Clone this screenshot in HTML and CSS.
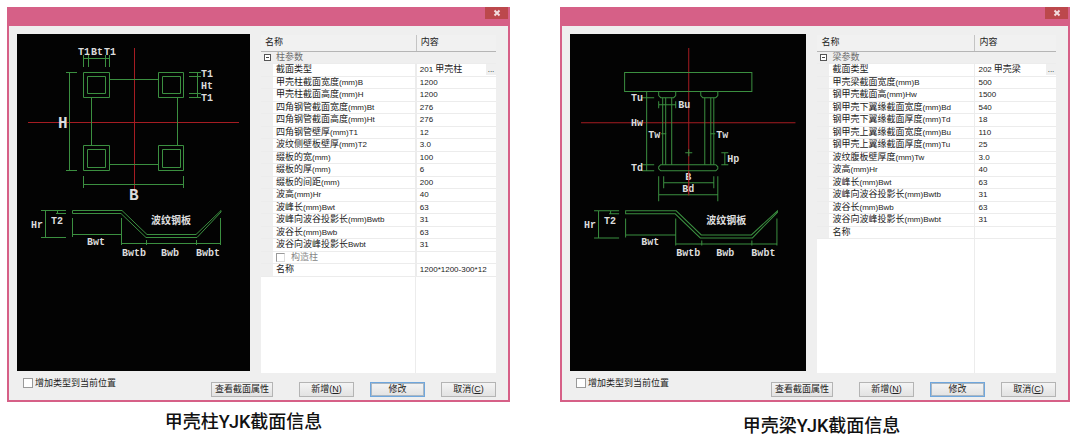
FILE: index.html
```html
<!DOCTYPE html>
<html lang="zh-CN">
<head>
<meta charset="utf-8">
<title>YJK截面信息</title>
<link rel="stylesheet" href="styles.css">
</head>
<body>
<main class="figures">
  <figure class="figure">
    <section class="dialog" aria-label="甲壳柱">
      <header class="titlebar"><button class="close" type="button" aria-label="关闭"><svg viewBox="0 0 8 8" width="8" height="8"><path d="M1.500 1.500L6.500 6.500M6.500 1.500L1.500 6.500"/></svg></button></header>
      <div class="content">
        <svg class="drawing" viewBox="0 0 233 337" role="img" aria-label="甲壳柱截面">
          <g class="axis"><path d="M117.500 14V158M11 88.500H222"/></g>
          <g class="line">
            <path d="M66.500 38.500h26v25h-26zM70.500 42.500h18v17h-18zM141.500 38.500h25v25h-25zM145.500 42.500h18v17h-18z"/>
            <path d="M66.500 111.500h26v25h-26zM70.500 115.500h18v18h-18zM141.500 111.500h25v25h-25zM145.500 115.500h18v18h-18z"/>
            <path d="M92.500 45.500h49M92.500 130.500h49M74.500 63.500v48M160.500 63.500v48"/>
            <path d="M66.500 24.500h26M66.500 21v12M71.500 21v12M88.500 21v12M92.500 21v12"/>
            <path d="M172 38.500h12M172 42.500h12M172 59.500h12M172 63.500h12M180.500 38.500v25"/>
            <path d="M52.500 38.500v98M49 38.500h11M49 136.500h11"/>
            <path d="M66.500 150.500h100M66.500 142v12M166.500 142v12"/>
            <path d="M28.500 176.500v27M24 176.500h25M24 203.500h25M39 179.500h10M40.500 176.500v3"/>
            <path d="M204 178L180 203.500H129L104 179.500H55.500V176.500H105L130 200.500H179L204 176.500Z"/>
            <path d="M55.500 184v19M55.500 200.500h49M104.500 184v27M104.500 209.500h99M129.500 206v5M179.500 206v5M203.500 184v27"/>
          </g>
          <g class="label">
            <text x="61" y="21">T1</text><text x="74" y="21">Bt</text><text x="87" y="21">T1</text>
            <text x="184" y="43">T1</text><text x="184" y="55">Ht</text><text x="184" y="67">T1</text>
            <text class="big" x="41" y="94">H</text><text class="big" x="112" y="166">B</text>
            <text x="14" y="194">Hr</text><text x="34" y="190">T2</text>
            <text x="70" y="211">Bwt</text><text x="105" y="222">Bwtb</text><text x="144" y="222">Bwb</text><text x="179" y="222">Bwbt</text>
            <text x="134" y="190">波纹钢板</text>
          </g>
        </svg>
        <div class="grid">
          <table>
            <colgroup><col class="gutter"><col class="name"><col></colgroup>
            <thead><tr><th colspan="2">名称</th><th>内容</th></tr></thead>
            <tbody>
              <tr class="group"><td><button class="toggle" type="button" aria-label="折叠"></button></td><th colspan="2">柱参数</th></tr>
              <tr><td></td><th>截面类型</th><td><div class="pick">201 <span class="cjk">甲壳柱</span><button type="button">...</button></div></td></tr>
              <tr><td></td><th>甲壳柱截面宽度<span>(mm)B</span></th><td>1200</td></tr>
              <tr><td></td><th>甲壳柱截面高度<span>(mm)H</span></th><td>1200</td></tr>
              <tr><td></td><th>四角钢管截面宽度<span>(mm)Bt</span></th><td>276</td></tr>
              <tr><td></td><th>四角钢管截面高度<span>(mm)Ht</span></th><td>276</td></tr>
              <tr><td></td><th>四角钢管壁厚<span>(mm)T1</span></th><td>12</td></tr>
              <tr><td></td><th>波纹侧壁板壁厚<span>(mm)T2</span></th><td>3.0</td></tr>
              <tr><td></td><th>缀板的宽<span>(mm)</span></th><td>100</td></tr>
              <tr><td></td><th>缀板的厚<span>(mm)</span></th><td>6</td></tr>
              <tr><td></td><th>缀板的间距<span>(mm)</span></th><td>200</td></tr>
              <tr><td></td><th>波高<span>(mm)Hr</span></th><td>40</td></tr>
              <tr><td></td><th>波峰长<span>(mm)Bwt</span></th><td>63</td></tr>
              <tr><td></td><th>波峰向波谷投影长<span>(mm)Bwtb</span></th><td>31</td></tr>
              <tr><td></td><th>波谷长<span>(mm)Bwb</span></th><td>63</td></tr>
              <tr><td></td><th>波谷向波峰投影长<span>Bwbt</span></th><td>31</td></tr>
              <tr><td></td><th><label class="option"><input type="checkbox" disabled>构造柱</label></th><td></td></tr>
              <tr><td></td><th>名称</th><td>1200*1200-300*12</td></tr>
            </tbody>
          </table>
        </div>
      </div>
      <footer class="actions">
        <label class="append"><input type="checkbox">增加类型到当前位置</label>
        <div class="buttons">
          <button class="view" type="button">查看截面属性</button>
          <button type="button">新增(<u>N</u>)</button>
          <button class="primary" type="button">修改</button>
          <button type="button">取消(<u>C</u>)</button>
        </div>
      </footer>
    </section>
    <figcaption class="caption-column">甲壳柱YJK截面信息</figcaption>
  </figure>

  <figure class="figure">
    <section class="dialog" aria-label="甲壳梁">
      <header class="titlebar"><button class="close" type="button" aria-label="关闭"><svg viewBox="0 0 8 8" width="8" height="8"><path d="M1.500 1.500L6.500 6.500M6.500 1.500L1.500 6.500"/></svg></button></header>
      <div class="content">
        <svg class="drawing" viewBox="0 0 236 336" role="img" aria-label="甲壳梁截面">
          <g class="axis"><path d="M118.500 14V161M11 88.500H225"/></g>
          <g class="line">
            <path d="M54.500 38.500h127v19h-127zM88.500 57.500v4l2 2h13l2-2v-4M130.500 57.500v4l2 2h13l2-2v-4"/>
            <path d="M92.500 63.500v67M95.500 63.500v67M101.500 63.500v67M134.500 63.500v67M140.500 63.500v67M143.500 63.500v67"/>
            <path d="M90.500 130.500h55l2 2v2l-2 2h-55l-2-2v-2z"/>
            <path d="M76.500 57.500v79M72 63.500h12M72 130.500h12M72 136.500h12"/>
            <path d="M88.500 70.500h17M88.500 67v7M105.500 67v7M91 99.500h5M140 99.500h5"/>
            <path d="M118.500 115v7M115 118.500h7M154.500 118.500v12M151 118.500h7M151 130.500h7"/>
            <path d="M93.500 148.500h50M93.500 142v12M143.500 142v12M88.500 160.500h59M88.500 142v25M147.500 142v25"/>
            <path d="M28.500 176.500v27M24 176.500h25M24 203.500h25M39 179.500h10M40.500 176.500v3"/>
            <path d="M207 178L182 203.500H130L105 179.500H55.500V176.500H106L131 200.500H181L207 176.500Z"/>
            <path d="M55.500 184v19M55.500 200.500h50M105.500 184v27M105.500 209.500h101M131.500 206v5M181.500 206v5M206.500 184v27"/>
          </g>
          <g class="label">
            <text x="61" y="67">Tu</text><text x="61" y="92">Hw</text><text x="61" y="137">Td</text>
            <text x="108" y="74">Bu</text><text x="78" y="104">Tw</text><text x="146" y="104">Tw</text>
            <text x="157" y="128">Hp</text><text x="115" y="146">B</text><text x="112" y="158">Bd</text>
            <text x="14" y="194">Hr</text><text x="34" y="190">T2</text>
            <text x="71" y="211">Bwt</text><text x="106" y="222">Bwtb</text><text x="146" y="222">Bwb</text><text x="181" y="222">Bwbt</text>
            <text x="136" y="190">波纹钢板</text>
          </g>
          <g class="axis"><path d="M118.500 137V161"/></g>
        </svg>
        <div class="grid">
          <table>
            <colgroup><col class="gutter"><col class="name"><col></colgroup>
            <thead><tr><th colspan="2">名称</th><th>内容</th></tr></thead>
            <tbody>
              <tr class="group"><td><button class="toggle" type="button" aria-label="折叠"></button></td><th colspan="2">梁参数</th></tr>
              <tr><td></td><th>截面类型</th><td><div class="pick">202 <span class="cjk">甲壳梁</span><button type="button">...</button></div></td></tr>
              <tr><td></td><th>甲壳梁截面宽度<span>(mm)B</span></th><td>500</td></tr>
              <tr><td></td><th>钢甲壳截面高<span>(mm)Hw</span></th><td>1500</td></tr>
              <tr><td></td><th>钢甲壳下翼缘截面宽度<span>(mm)Bd</span></th><td>540</td></tr>
              <tr><td></td><th>钢甲壳下翼缘截面厚度<span>(mm)Td</span></th><td>18</td></tr>
              <tr><td></td><th>钢甲壳上翼缘截面宽度<span>(mm)Bu</span></th><td>110</td></tr>
              <tr><td></td><th>钢甲壳上翼缘截面厚度<span>(mm)Tu</span></th><td>25</td></tr>
              <tr><td></td><th>波纹腹板壁厚度<span>(mm)Tw</span></th><td>3.0</td></tr>
              <tr><td></td><th>波高<span>(mm)Hr</span></th><td>40</td></tr>
              <tr><td></td><th>波峰长<span>(mm)Bwt</span></th><td>63</td></tr>
              <tr><td></td><th>波峰向波谷投影长<span>(mm)Bwtb</span></th><td>31</td></tr>
              <tr><td></td><th>波谷长<span>(mm)Bwb</span></th><td>63</td></tr>
              <tr><td></td><th>波谷向波峰投影长<span>(mm)Bwbt</span></th><td>31</td></tr>
              <tr><td></td><th>名称</th><td></td></tr>
            </tbody>
          </table>
        </div>
      </div>
      <footer class="actions">
        <label class="append"><input type="checkbox">增加类型到当前位置</label>
        <div class="buttons">
          <button class="view" type="button">查看截面属性</button>
          <button type="button">新增(<u>N</u>)</button>
          <button class="primary" type="button">修改</button>
          <button type="button">取消(<u>C</u>)</button>
        </div>
      </footer>
    </section>
    <figcaption class="caption-beam">甲壳梁YJK截面信息</figcaption>
  </figure>
</main>
</body>
</html>
```
FILE: styles.css
```css
* { box-sizing: border-box; }

body {
  margin: 0;
  background: #fff;
  color: #222;
  font: 9px/12px "Liberation Sans", "Noto Sans CJK SC", sans-serif;
}

button { font: inherit; color: inherit; padding: 0; }

.figures {
  display: grid;
  grid-template-columns: 503fr 510fr;
  gap: 50px;
  align-items: start;
  padding: 7px 10px 0 7px;
}

.figure { margin: 0; min-width: 0; }

/* Dialog frame */
.dialog {
  border: 2px solid #d66087;
  border-top: 0;
  background: #efefef;
}

.titlebar {
  display: flex;
  justify-content: flex-end;
  align-items: flex-start;
  height: 19px;
  background: #d66087;
}

.close {
  display: flex;
  align-items: center;
  justify-content: center;
  width: 23px;
  height: 12px;
  border: 0;
  background: #bc484c;
}

.close path { stroke: #f3dede; stroke-width: 2; fill: none; }

.content {
  display: grid;
  grid-template-columns: 233fr 235fr;
  gap: 11px;
  padding: 8px 12px 0 8px;
}

/* Section drawing */
.drawing { display: block; width: 100%; margin-bottom: 2px; background: #030303; }
.axis { fill: none; stroke: #a51c22; }
.line { fill: none; stroke: #3b8f40; }
.label {
  fill: #dcdcdc;
  font: bold 10px "Liberation Mono", "Noto Sans CJK SC", monospace;
}
.label .big { font-size: 16px; }

/* Property grid */
.grid {
  margin-top: 1px;
  background: linear-gradient(#ececec, #ececec) 66% 0 / 1px 100% no-repeat #fff;
}

table { width: 100%; border-collapse: collapse; table-layout: fixed; }
.gutter { width: 12px; }
.name { width: 61%; }

th, td {
  padding: 0;
  font-weight: 400;
  text-align: left;
  white-space: nowrap;
  line-height: 11px;
}

thead th {
  height: 16px;
  padding-left: 4px;
  background: #f1f1f1;
  border-bottom: 1px solid #b5b5b5;
}
thead th + th { border-left: 1px solid #c4c4c4; }

tbody tr { height: 12px; border-bottom: 1px solid #ececec; }
tbody tr:nth-child(even) { height: 13px; }
tbody td:first-child { background: #efefef; }
tbody th { padding-left: 3px; }
tbody th span { font-size: 8px; }
tbody th + td {
  padding-left: 3px;
  border-left: 1px solid #ececec;
  font-size: 8px;
}

.group, .group th { background: #efefef; color: #6c6c6c; }

.toggle {
  display: block;
  width: 7px;
  height: 7px;
  margin-left: 3px;
  border: 1px solid #555;
  background: linear-gradient(#444, #444) center / 3px 1px no-repeat #fff;
}

.pick { display: flex; gap: 2px; }
.pick .cjk { font-size: 9px; }
.pick button {
  width: 10px;
  margin-left: auto;
  border: 0;
  background: #efefef;
}

.option { display: flex; align-items: center; gap: 6px; color: #858585; }

input[type="checkbox"] {
  appearance: none;
  flex: none;
  width: 10px;
  height: 10px;
  margin: 0;
  border: 1px solid #9a9a9a;
  background: #fff;
}
.option input[type="checkbox"] {
  width: 9px;
  height: 9px;
  border-right-color: #ddd;
  border-bottom-color: #ddd;
}

/* Footer */
.actions {
  display: flex;
  justify-content: space-between;
  align-items: flex-start;
  padding: 4px 12px 3px 14px;
}

.append { display: flex; align-items: center; gap: 2px; }

.buttons { display: flex; gap: 16px; padding-top: 5px; }

.buttons button {
  width: 55px;
  height: 15px;
  border: 1px solid #b4b4b4;
  background: linear-gradient(#f4f4f4, #e2e2e2);
  line-height: 13px;
  white-space: nowrap;
}
.buttons .view { width: 62px; margin-right: 10px; }
.buttons .primary { border-color: #6fa6dc; box-shadow: inset 0 0 0 1px #a9b7c4; }

/* Captions */
figcaption {
  color: #111;
  font: 500 18px/22px Roboto, "Noto Sans CJK SC", sans-serif;
  text-align: center;
}
.caption-column { padding: 9px 30px 0 0; }
.caption-beam { padding: 13px 0 0 13px; }
```
